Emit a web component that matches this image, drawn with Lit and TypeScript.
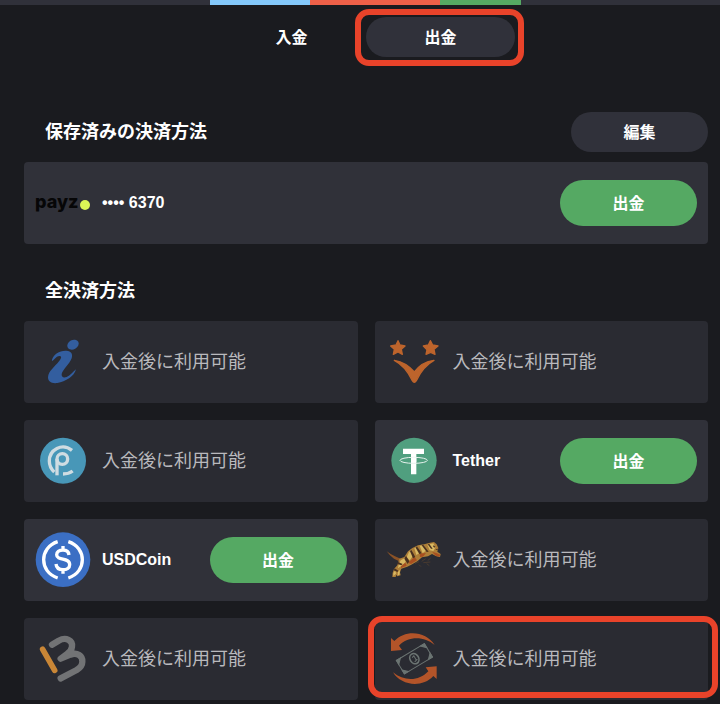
import { LitElement, html, css, nothing, type TemplateResult } from "lit";
import { customElement, property } from "lit/decorators.js";

const icons: Record<string, TemplateResult> = {
  info: html`<svg viewBox="45 72 168 168" aria-hidden="true">
    <g fill="#335e9f">
      <ellipse cx="159" cy="104" rx="18" ry="14" transform="rotate(-28 159 104)" />
      <path d="M96 149C102 132 118 121 139 122C154 123 159 132 155 145C149 162 128 179 125 192C124 202 131 204 140 201C151 196 159 186 168 178C163 199 137 215 112 219C94 221 84 215 84 202C85 183 105 170 117 154C124 144 126 139 119 138C111 137 105 147 98 152C96 153 95 152 96 149Z" />
    </g>
  </svg>`,
  stars: html`<svg viewBox="46 72 168 168" aria-hidden="true">
    <g fill="#bd642c" stroke="#bd642c" stroke-width="4" stroke-linejoin="round">
      <path d="M82 92L88 105L103 108L92 118L95 133L82 126L68 133L71 118L60 108L76 105Z" />
      <path d="M179 92L186 105L202 108L190 118L193 133L180 127L166 133L169 119L158 108L173 105Z" />
      <path d="M71 151C95 155 116 168 131 186C144 168 166 154 190 151C166 164 148 188 137 212Q131 222 125 212C112 184 96 164 71 151Z" />
    </g>
  </svg>`,
  pcoin: html`<svg viewBox="45 54 168 168" aria-hidden="true">
    <circle cx="129" cy="137" r="69" fill="#4897b8" />
    <g fill="none" stroke="#cfdce2" stroke-width="10">
      <path d="M156 106C126 82 88 104 88 138C88 152 93 162 103 171" />
      <path d="M111 181V132" />
      <circle cx="127" cy="132" r="16" />
      <path d="M129 177C140 177 150 174 158 168" />
    </g>
  </svg>`,
  tether: html`<svg viewBox="46 54 168 168" aria-hidden="true">
    <circle cx="130" cy="136" r="68" fill="#509f7f" />
    <path d="M97 101H160V117H137V178H121V117H97Z" fill="#fff" />
    <ellipse cx="129" cy="136" rx="41" ry="9" fill="none" stroke="#e6f2ed" stroke-width="3" />
    <path d="M121 128H137V141H121Z" fill="#fff" />
  </svg>`,
  usdc: html`<svg viewBox="45 51 168 168" aria-hidden="true">
    <circle cx="129" cy="134" r="82" fill="#3b6fc4" />
    <g fill="none" stroke="#fff" stroke-width="10">
      <path d="M113 80C57 98 57 171 113 189M145 80C201 98 201 171 145 189" />
      <path d="M147 120C146 109 139 105 129 105C117 105 110 111 110 119C110 139 149 126 149 149C149 158 141 164 129 164C116 164 109 158 108 147M129 93V107M129 162V176" />
    </g>
  </svg>`,
  tiger: html`<svg viewBox="46 51 168 168" aria-hidden="true">
    <path d="M48 109L60 117L73 124L90 131L84 138L70 131L58 121Z" fill="#8a5226" />
    <path d="M86 131L101 126L112 109L125 99L142 91L160 88L178 83L190 81L198 88L203 99L200 110L210 117L208 126L197 124L184 117L172 124L154 127L140 139L122 149L110 155L92 161L88 172L90 181L80 184L77 179L75 186L65 186L66 173L70 162L80 151Z" fill="#ad7e38" />
    <g fill="#d8b963">
      <path d="M90 136L103 129L105 140L95 151L82 160L84 149Z" />
      <path d="M115 111L124 104L126 124L117 136L108 127Z" />
      <path d="M131 100L141 95L147 114L137 120Z" />
      <path d="M147 92L160 91L167 106L156 115Z" />
      <path d="M170 89L188 85L194 98L188 108L177 106Z" />
      <path d="M68 174L74 166L76 176L68 183ZM82 171L88 164L86 180L81 181Z" />
    </g>
    <g fill="#a94f20">
      <path d="M112 143L132 126L139 136L121 147Z" />
      <path d="M184 110L199 115L209 119L206 125L195 122Z" />
      <path d="M91 154L104 143L108 152L91 159ZM147 116L166 114L157 125L148 126Z" />
    </g>
    <g fill="#49301f">
      <path d="M106 122L116 139L111 147L101 131Z" />
      <path d="M122 104L134 126L127 130L118 109Z" />
      <path d="M139 94L153 115L146 117L135 98Z" />
      <path d="M158 89L174 110L168 111L153 91Z" />
      <path d="M176 87L186 101L181 101L171 88Z" />
      <path d="M82 141L96 147L92 151L80 147ZM72 160L83 167L80 171L69 166Z" />
      <path d="M189 91L194 95L191 98L187 94ZM194 103L202 101L200 106Z" />
    </g>
    <path d="M133 145L145 140M153 139L165 131M145 149L151 155M158 143L179 141M168 146L176 152M180 129L171 137" stroke="#59432e" stroke-width="2" />
  </svg>`,
  bcoin: html`<svg viewBox="45 63 168 168" aria-hidden="true">
    <g fill="none" stroke-linecap="round" stroke-linejoin="round">
      <path d="M68 118L104 181" stroke="#c98636" stroke-width="17" />
      <path d="M96 104L116 92C138 80 159 91 156 110C155 119 151 125 142 131L122 146L151 134C172 126 188 138 187 155C187 165 181 173 170 180L122 205" stroke="#727375" stroke-width="19" />
    </g>
  </svg>`,
  cash: html`<svg viewBox="76 63 168 168" aria-hidden="true">
    <g fill="#b35429">
      <path d="M91 84L101 93C135 57 197 64 222 105C191 79 144 77 115 107L124 120L91 123Z" />
      <path d="M228 207L218 198C184 235 121 227 97 187C129 214 174 215 203 184L195 172L228 169Z" />
    </g>
    <g transform="rotate(-31 161 146)" fill="none" stroke="#6b7472" stroke-width="3">
      <rect x="112" y="123" width="98" height="47" />
      <path d="M112 123H126L112 137ZM210 123H196L210 137ZM112 170V156L126 170ZM210 170V156L196 170Z" fill="#6b7472" />
      <ellipse cx="161" cy="146" rx="13" ry="16" stroke-width="5" />
      <path d="M157 140L164 138V154M157 155L168 152" />
    </g>
  </svg>`,
};

interface Method {
  icon: string;
  name?: string;
  marked?: boolean;
}

const methods: Method[] = [
  { icon: "info" },
  { icon: "stars" },
  { icon: "pcoin" },
  { icon: "tether", name: "Tether" },
  { icon: "usdc", name: "USDCoin" },
  { icon: "tiger" },
  { icon: "bcoin" },
  { icon: "cash", marked: true },
];

const shared = css`
  * {
    box-sizing: border-box;
  }
  button {
    border: 0;
    margin: 0;
    padding: 2px 0 0;
    color: #fff;
    font: 700 16px/24px "Liberation Sans", "Noto Sans CJK JP", sans-serif;
    cursor: pointer;
  }
`;

@customElement("method-card")
export class MethodCard extends LitElement {
  @property() icon = "";
  @property() name = "";
  @property({ type: Boolean }) marked = false;

  static styles = [
    shared,
    css`
      :host {
        display: block;
      }
      .card {
        position: relative;
        display: flex;
        align-items: center;
        gap: 11px;
        min-height: 82px;
        padding: 0 11px;
        border-radius: 4px;
        background: #2a2b32;
      }
      .active {
        background: #303139;
      }
      .icon {
        flex: none;
        width: 56px;
        height: 56px;
        display: flex;
        align-items: center;
      }
      .icon svg {
        width: 100%;
        height: 100%;
      }
      .payz {
        padding-bottom: 2px;
        color: #060607;
        font: 800 18px/24px Inter, sans-serif;
      }
      .dot {
        flex: none;
        width: 10px;
        height: 10px;
        margin: 4px 0 0 1px;
        border-radius: 50%;
        background: #dcf556;
      }
      .label {
        flex: 1;
        color: #b9b9bd;
        font-size: 18px;
        line-height: 24px;
      }
      .active .label {
        color: #fff;
        font-size: 16px;
        font-weight: 700;
      }
      .withdraw {
        width: 137px;
        height: 46px;
        border-radius: 23px;
        background: #55a963;
      }
      .ring {
        position: absolute;
        inset: -2px -10px 2px -7px;
        border: 6px solid #e9432a;
        border-radius: 14px;
        pointer-events: none;
      }
    `,
  ];

  render() {
    return html`<div class="card ${this.name ? "active" : ""}">
      <span class="icon">
        ${this.icon === "payz"
          ? html`<span class="payz">payz</span><span class="dot"></span>`
          : icons[this.icon]}
      </span>
      <span class="label">${this.name || "入金後に利用可能"}</span>
      ${this.name ? html`<button class="withdraw" type="button">出金</button>` : nothing}
      ${this.marked ? html`<span class="ring"></span>` : nothing}
    </div>`;
  }
}

@customElement("app-root")
export class AppRoot extends LitElement {
  static styles = [
    shared,
    css`
      :host {
        display: block;
        min-height: 100vh;
        background: #1a1b1f;
        color: #fff;
        font-family: "Liberation Sans", "Noto Sans CJK JP", sans-serif;
      }
      .strip {
        display: grid;
        grid-template-columns: 210fr 100fr 130fr 81fr 199fr;
        height: 5px;
        background: #30313a;
      }
      .blue {
        grid-column: 2;
        background: #84c8fa;
      }
      .coral {
        background: #ee6048;
      }
      .green {
        background: #55a963;
      }
      main {
        padding: 12px 12px 4px 24px;
      }
      .tabs {
        display: flex;
        justify-content: center;
      }
      .tab {
        position: relative;
        width: 149px;
        height: 40px;
        border-radius: 20px;
        background: none;
      }
      .selected {
        background: #30313a;
      }
      .ring {
        position: absolute;
        inset: -8px -9px -9px -11px;
        border: 6px solid #e9432a;
        border-radius: 14px;
        pointer-events: none;
      }
      .head {
        display: flex;
        align-items: center;
        justify-content: space-between;
        min-height: 40px;
        margin: 27px 0 10px;
        padding-left: 21px;
      }
      .saved {
        margin-top: 55px;
      }
      h2 {
        margin: 0;
        font-size: 18px;
        line-height: 24px;
        font-weight: 700;
      }
      .edit {
        width: 137px;
        height: 40px;
        border-radius: 20px;
        background: #30313a;
      }
      .grid {
        display: grid;
        grid-template-columns: 1fr 1fr;
        gap: 17px;
      }
    `,
  ];

  render() {
    return html`
      <div class="strip">
        <span class="blue"></span><span class="coral"></span><span class="green"></span>
      </div>
      <main>
        <nav class="tabs">
          <button class="tab" type="button">入金</button>
          <button class="tab selected" type="button" aria-current="page">
            出金<span class="ring"></span>
          </button>
        </nav>
        <section>
          <div class="head saved">
            <h2>保存済みの決済方法</h2>
            <button class="edit" type="button">編集</button>
          </div>
          <method-card icon="payz" name="•••• 6370"></method-card>
        </section>
        <section>
          <div class="head"><h2>全決済方法</h2></div>
          <div class="grid">
            ${methods.map(
              (m) => html`<method-card
                .icon=${m.icon}
                .name=${m.name ?? ""}
                .marked=${m.marked ?? false}
              ></method-card>`
            )}
          </div>
        </section>
      </main>
    `;
  }
}
